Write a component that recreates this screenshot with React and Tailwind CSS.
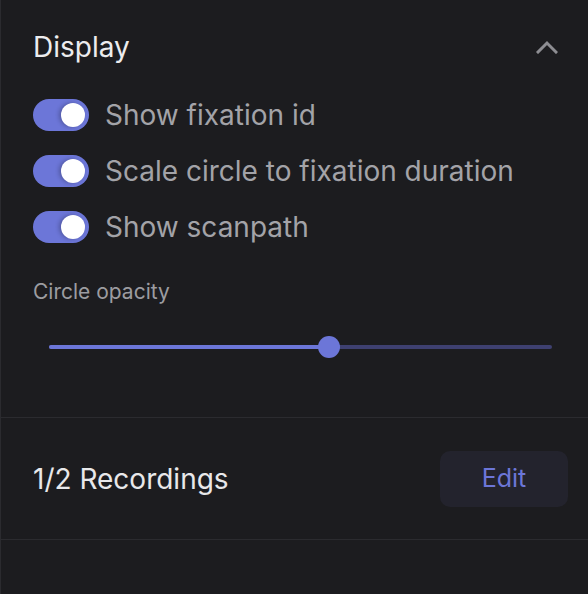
import React from "react";

function Toggle() {
  return (
    <div className="relative w-[56px] h-[32px] rounded-full bg-[#6c76d8] shrink-0">
      <div className="absolute right-[4px] top-[4px] w-[24px] h-[24px] rounded-full bg-white shadow-[-2px_0_4px_rgba(0,0,0,0.25)]" />
    </div>
  );
}

function Row({ label }) {
  return (
    <div className="h-[56px] flex items-center gap-[16px]">
      <Toggle />
      <span className="text-[28px] leading-none text-[#a3a3a8]">{label}</span>
    </div>
  );
}

export default function App() {
  return (
    <div
      className="w-[588px] h-[594px] bg-[#1c1c1f] border-l border-[#2b2b2f] flex flex-col"
      style={{ fontFamily: "Inter, 'Noto Sans', sans-serif" }}
    >
      <div className="pl-[32px]">
        <div className="mt-[17px] h-[60px] flex items-center justify-between pr-[30px]">
          <span className="text-[28px] leading-none text-[#ececee]">Display</span>
          <svg width="22" height="14" viewBox="0 0 22 14" fill="none">
            <path d="M2 12 L11 3 L20 12" stroke="#8d8d92" strokeWidth="3" strokeLinecap="square" />
          </svg>
        </div>
        <div className="mt-[10px] flex flex-col">
          <Row label="Show fixation id" />
          <Row label="Scale circle to fixation duration" />
          <Row label="Show scanpath" />
        </div>
        <div className="mt-[24px] h-[24px] flex items-center">
          <span className="text-[21px] leading-none text-[#9c9ca1]">Circle opacity</span>
        </div>
        <div className="mt-[24px] h-[40px] flex items-center pl-[16px] pr-[36px]">
          <div className="relative w-full h-[4px] rounded-full bg-[#3e4070]">
            <div className="absolute left-0 top-0 h-[4px] rounded-full bg-[#6c76d8]" style={{ width: "55.6%" }} />
            <div
              className="absolute top-1/2 w-[22px] h-[22px] -translate-x-1/2 -translate-y-1/2 rounded-full bg-[#6c76d8]"
              style={{ left: "55.6%" }}
            />
          </div>
        </div>
      </div>
      <div className="mt-[50px] h-px bg-[#2b2b2f]" />
      <div className="h-[121px] flex items-center justify-between pl-[32px] pr-[20px]">
        <span className="text-[28px] leading-none text-[#e8e8ea]">1/2 Recordings</span>
        <button className="w-[128px] h-[56px] rounded-[10px] bg-[#23232d] text-[25px] text-[#6c76d8] flex items-center justify-center">
          Edit
        </button>
      </div>
      <div className="h-px bg-[#2b2b2f]" />
    </div>
  );
}
